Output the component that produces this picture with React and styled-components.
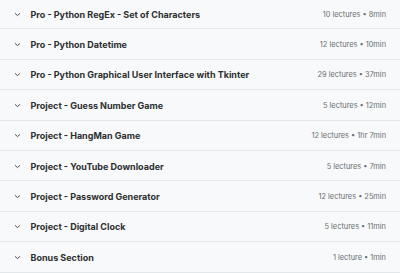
import React from 'react';
import styled, { createGlobalStyle } from 'styled-components';

const Global = createGlobalStyle`
  body {
    margin: 0;
    background: #ffffff;
    font-family: Inter, "Noto Sans", sans-serif;
  }
`

const List = styled.div`
  width: 400px;
  height: 273px;
  overflow: hidden;
  background: #f7f9fa;
`

const Inner = styled.div`
  margin-top: -1px;
`

const Row = styled.div`
  box-sizing: border-box;
  height: 30.4px;
  display: flex;
  align-items: center;
  padding: 1px 14px 0 14px;
  border-bottom: 1px solid #e4e7ea;
  background: #f7f9fa;
`

const Chevron = styled.svg`
  width: 7px;
  height: 7px;
  flex: none;
  margin-right: 9.5px;
`

const Title = styled.div`
  flex: 1;
  font-size: 9px;
  font-weight: 700;
  color: #2d2f31;
  white-space: nowrap;
`

const Meta = styled.div`
  font-size: 7.4px;
  color: #6a6f73;
  white-space: nowrap;
`

const sections = [
  ['Pro - Python RegEx - Set of Characters', '10 lectures • 8min'],
  ['Pro - Python Datetime', '12 lectures • 10min'],
  ['Pro - Python Graphical User Interface with Tkinter', '29 lectures • 37min'],
  ['Project - Guess Number Game', '5 lectures • 12min'],
  ['Project - HangMan Game', '12 lectures • 1hr 7min'],
  ['Project - YouTube Downloader', '5 lectures • 7min'],
  ['Project - Password Generator', '12 lectures • 25min'],
  ['Project - Digital Clock', '5 lectures • 11min'],
  ['Bonus Section', '1 lecture • 1min'],
]

const App = () => {
  return <List>
    <Global />
    <Inner>
      {sections.map(([title, meta]) => (
        <Row key={title}>
          <Chevron viewBox="0 0 7 7">
            <path d="M1.3 2.6 L3.5 4.6 L5.7 2.6" fill="none" stroke="#4a4d50" strokeWidth="1" strokeLinecap="round" strokeLinejoin="round" />
          </Chevron>
          <Title>{title}</Title>
          <Meta>{meta}</Meta>
        </Row>
      ))}
    </Inner>
  </List>
}

export default App
